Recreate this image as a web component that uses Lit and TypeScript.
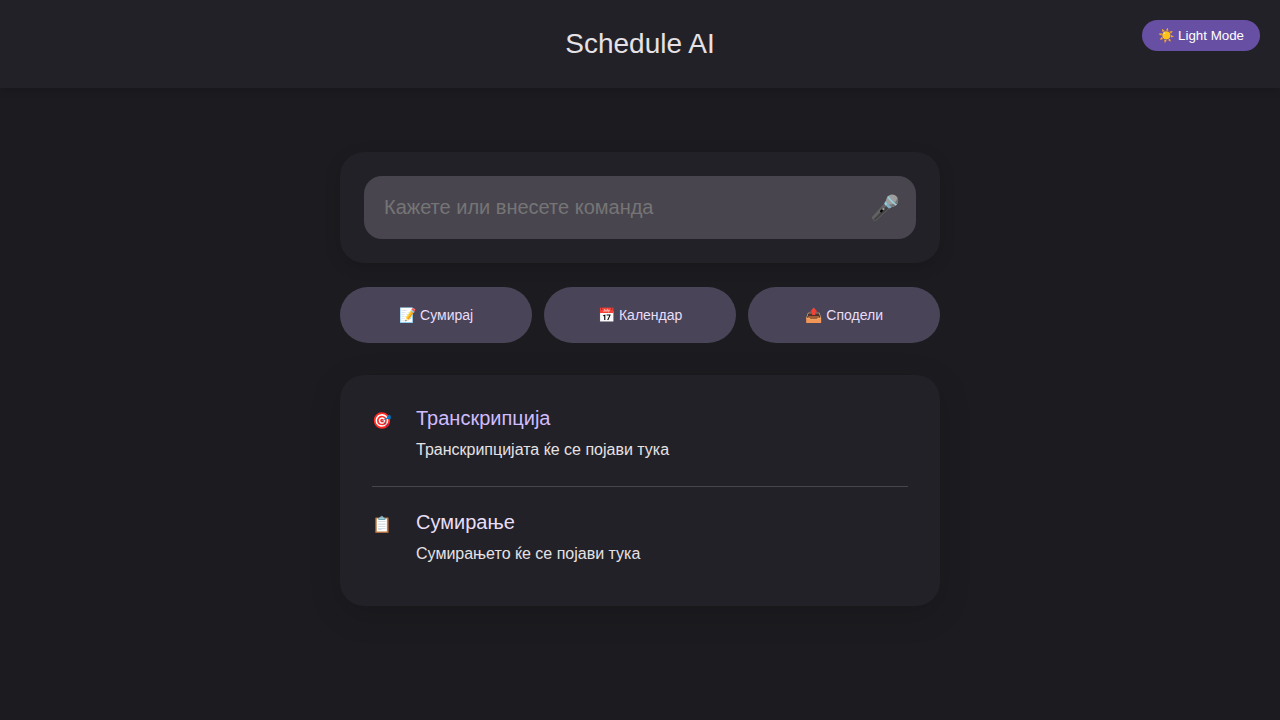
import { LitElement, html, css } from "lit";
import { customElement } from "lit/decorators.js";

const actions = ["📝 Сумирај", "📅 Календар", "📤 Сподели"];
const results = [
  { icon: "🎯", title: "Транскрипција", text: "Транскрипцијата ќе се појави тука", tone: "primary" },
  { icon: "📋", title: "Сумирање", text: "Сумирањето ќе се појави тука", tone: "secondary" },
];

@customElement("app-root")
export class AppRoot extends LitElement {
  static styles = css`
    :host {
      display: block;
      min-height: 100vh;
      background: #1c1b1f;
      color: #e6e1e5;
      font-family: "Liberation Sans", sans-serif;
      font-size: 16px;
      line-height: 24px;
    }
    * { box-sizing: border-box; }
    header {
      position: relative;
      height: 88px;
      display: flex;
      align-items: center;
      justify-content: center;
      background: #222127;
      box-shadow: 0 2px 8px rgba(0, 0, 0, 0.15);
    }
    h1 { margin: 0; font-size: 28px; font-weight: 400; line-height: 36px; }
    button { font-family: "Liberation Sans", sans-serif; border: none; }
    .theme {
      position: absolute;
      top: 20px;
      right: 20px;
      padding: 8px 16px;
      font-size: 13.3333px;
      line-height: 15px;
      color: #fff;
      background: #6750a4;
      border-radius: 20px;
    }
    .sun { margin-right: -0.8px; }
    main { width: 600px; margin: 0 auto; padding-top: 64px; }
    .command {
      padding: 24px;
      margin-bottom: 24px;
      background: #222127;
      border-radius: 24px;
      box-shadow: 0 4px 16px rgba(0, 0, 0, 0.15);
    }
    .field {
      display: flex;
      align-items: center;
      height: 63px;
      padding: 0 16px 0 20px;
      background: #49454f;
      border-radius: 18px;
    }
    input {
      flex: 1;
      min-width: 0;
      padding: 0;
      border: none;
      outline: none;
      background: transparent;
      color: #e6e1e5;
      font-family: inherit;
      font-size: 20px;
    }
    input::placeholder { color: #757575; }
    .mic { padding: 0; background: none; font-size: 24px; line-height: 28px; color: #d0bcff; }
    .actions { display: grid; grid-template-columns: repeat(3, 1fr); gap: 12px; margin-bottom: 32px; }
    .action {
      height: 56px;
      padding: 0 0 0 0.4px;
      border-radius: 28px;
      background: #4a4458;
      color: #e8def8;
      font-size: 14px;
    }
    .results {
      padding: 7px 32px 8px;
      height: 231px;
      background: #222127;
      border-radius: 24px;
      box-shadow: 0 8px 32px rgba(0, 0, 0, 0.15);
    }
    .result { display: flex; gap: 24px; height: 104px; padding-top: 22px; }
    .result + .result { border-top: 1px solid #49454f; padding-top: 21px; }
    .icon { width: 20px; font-size: 16px; line-height: 34px; }
    h2 { margin: 0 0 6px; font-size: 20px; font-weight: 400; line-height: 28px; }
    .primary { color: #d0bcff; }
    .secondary { color: #e8def8; }
    p { margin: 0; }
  `;

  render() {
    return html`
      <header>
        <h1>Schedule AI</h1>
        <button class="theme"><span class="sun">☀️</span> Light Mode</button>
      </header>
      <main>
        <section class="command">
          <div class="field">
            <input placeholder="Кажете или внесете команда" />
            <button class="mic">🎤</button>
          </div>
        </section>
        <div class="actions">${actions.map((a) => html`<button class="action">${a}</button>`)}</div>
        <section class="results">
          ${results.map(
            (r) => html`<article class="result">
              <span class="icon">${r.icon}</span>
              <div><h2 class=${r.tone}>${r.title}</h2><p>${r.text}</p></div>
            </article>`
          )}
        </section>
      </main>
    `;
  }
}
